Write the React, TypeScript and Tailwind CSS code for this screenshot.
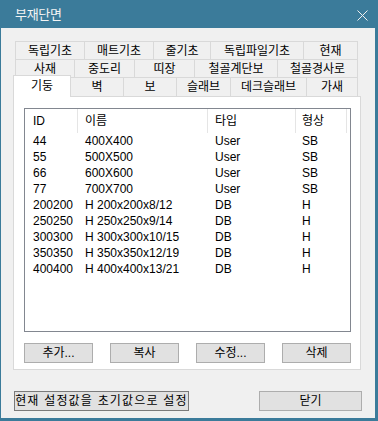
import React from "react";

const FONT = { fontFamily: '"Liberation Sans", "Noto Sans CJK KR", sans-serif' };

const row1 = [
  ["독립기초", 69],
  ["매트기초", 69],
  ["줄기초", 57],
  ["독립파일기초", 93],
  ["현재", 55],
] as const;
const row2 = [
  ["사재", 59],
  ["중도리", 60],
  ["띠장", 60],
  ["철골계단보", 83],
  ["철골경사로", 81],
] as const;
const row3 = [
  ["벽", 52],
  ["보", 53],
  ["슬래브", 54],
  ["데크슬래브", 76],
  ["가새", 52],
] as const;

const data = [
  ["44", "400X400", "User", "SB"],
  ["55", "500X500", "User", "SB"],
  ["66", "600X600", "User", "SB"],
  ["77", "700X700", "User", "SB"],
  ["200200", "H 200x200x8/12", "DB", "H"],
  ["250250", "H 250x250x9/14", "DB", "H"],
  ["300300", "H 300x300x10/15", "DB", "H"],
  ["350350", "H 350x350x12/19", "DB", "H"],
  ["400400", "H 400x400x13/21", "DB", "H"],
];

function TabRow({ items }: { items: readonly (readonly [string, number])[] }) {
  return (
    <div className="flex h-[18px] ml-[2px]">
      {items.map(([label, w], i) => (
        <div
          key={label}
          style={{ width: w }}
          className={`flex items-center justify-center h-full border-t border-l border-[#d9d9d9] text-[12px] leading-none text-black ${
            i === items.length - 1 ? "border-r" : ""
          }`}
        >
          {label}
        </div>
      ))}
    </div>
  );
}

function Btn({ label }: { label: string }) {
  return (
    <div className="w-[69px] h-[20px] flex items-center justify-center bg-[#e1e1e1] border border-[#adadad] text-[12px] leading-none text-black">
      {label}
    </div>
  );
}

export default function App() {
  return (
    <div className="w-[378px] h-[421px] bg-[#3b7b9a] flex flex-col overflow-hidden" style={FONT}>
      <div className="h-[28px] flex items-center justify-between pl-[15px] pr-[10px]">
        <span className="text-[13px] tracking-[-0.3px] text-[#f4f4f4] leading-none">부재단면</span>
        <svg width="11" height="11" viewBox="0 0 11 11" className="mt-[2px]">
          <path d="M0.5 0.5 L10.5 10.5 M10.5 0.5 L0.5 10.5" stroke="#f0f0f0" strokeWidth="1" />
        </svg>
      </div>
      <div className="ml-[1px] mr-[3px] h-[390px] bg-[#f0f0f0] flex flex-col pt-[13px]">
        <div className="ml-[12px] flex flex-col">
          <TabRow items={row1} />
          <TabRow items={row2} />
          <div className="flex items-end h-[19px]">
            <div className="relative z-10 w-[58px] h-[22px] -mb-px bg-white border-t border-l border-r border-[#d9d9d9] flex items-center justify-center pb-[2px] text-[12px] leading-none text-black">
              기둥
            </div>
            {row3.map(([label, w], i) => (
              <div
                key={label}
                style={{ width: w }}
                className={`flex items-center justify-center h-full border-t border-[#d9d9d9] text-[12px] leading-none text-black ${
                  i === 0 ? "" : "border-l"
                } ${i === row3.length - 1 ? "border-r" : ""}`}
              >
                {label}
              </div>
            ))}
          </div>
          <div className="w-[348px] h-[274px] bg-white border border-[#d9d9d9] flex flex-col pl-[10px] pr-[9px] pt-[11px]">
            <div className="w-[327px] h-[224px] border border-[#828790] bg-white flex flex-col text-[12px] text-black leading-none">
              <div className="flex h-[24px]">
                <div className="w-[53px] pl-[8px] flex items-center border-r border-[#e5e5e5]">ID</div>
                <div className="w-[130px] pl-[7px] flex items-center border-r border-[#e5e5e5]">이름</div>
                <div className="w-[88px] pl-[7px] flex items-center border-r border-[#e5e5e5]">타입</div>
                <div className="w-[51px] pl-[6px] flex items-center border-r border-[#e5e5e5]">형상</div>
              </div>
              {data.map((r) => (
                <div key={r[0]} className="flex h-[16px] items-center">
                  <div className="w-[53px] pl-[8px]">{r[0]}</div>
                  <div className="w-[130px] pl-[7px]">{r[1]}</div>
                  <div className="w-[88px] pl-[7px]">{r[2]}</div>
                  <div className="w-[51px] pl-[6px]">{r[3]}</div>
                </div>
              ))}
            </div>
            <div className="w-[327px] flex justify-between mt-[11px]">
              <Btn label="추가..." />
              <Btn label="복사" />
              <Btn label="수정..." />
              <Btn label="삭제" />
            </div>
          </div>
        </div>
        <div className="flex mt-[21px] h-[20px]">
          <div className="ml-[13px] w-[175px] h-full bg-[#e1e1e1] border border-[#7a7a7a] flex items-center justify-center text-[12px] tracking-[1.2px] leading-none text-black whitespace-nowrap overflow-hidden">
            현재 설정값을 초기값으로 설정
          </div>
          <div className="ml-[70px] w-[103px] h-full bg-[#e1e1e1] border border-[#adadad] flex items-center justify-center text-[12px] leading-none text-black">
            닫기
          </div>
        </div>
      </div>
    </div>
  );
}
